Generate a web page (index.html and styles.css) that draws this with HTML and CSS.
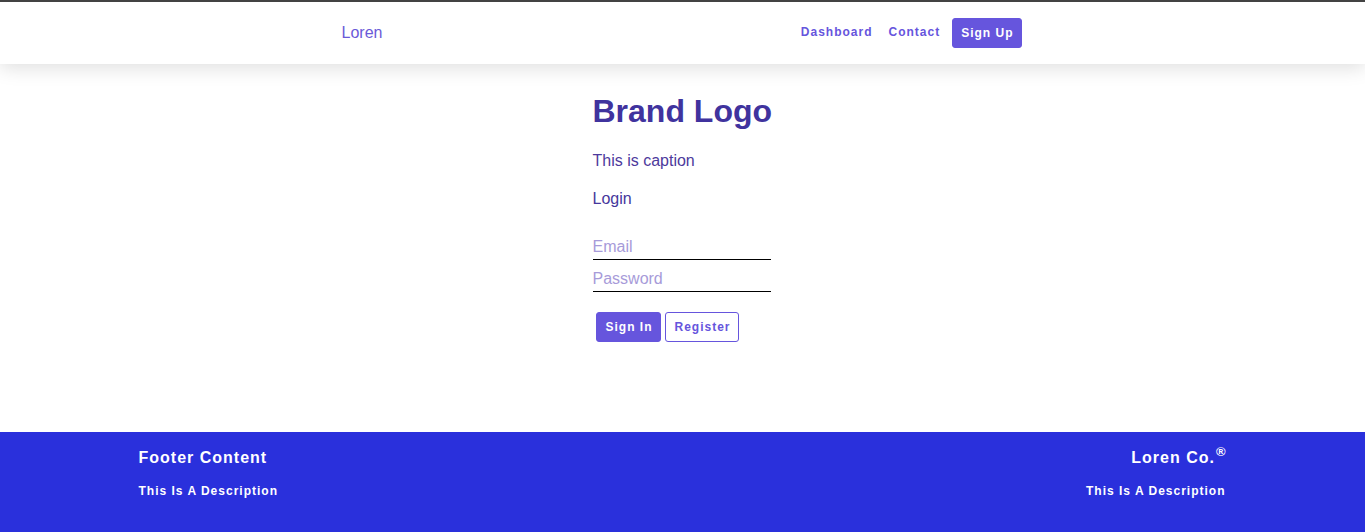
FILE: index.html
```
<!DOCTYPE html>
<html lang="en">
<head>
<meta charset="utf-8">
<title>Loren</title>
<link rel="stylesheet" href="styles.css">
</head>
<body>
<header class="topbar">
  <div class="topbar-inner">
    <a class="brand" href="#">Loren</a>
    <nav class="nav">
      <a class="nav-link" href="#">Dashboard</a>
      <a class="nav-link" href="#">Contact</a>
      <a class="btn btn-solid nav-btn" href="#">Sign Up</a>
    </nav>
  </div>
</header>
<main class="main">
  <div class="panel">
    <h1 class="logo">Brand Logo</h1>
    <p class="caption">This is caption</p>
    <p class="label">Login</p>
    <form class="form">
      <input class="field" type="email" placeholder="Email">
      <input class="field field-gap" type="password" placeholder="Password">
      <div class="actions">
        <button class="btn btn-solid" type="button">Sign In</button>
        <button class="btn btn-outline" type="button">Register</button>
      </div>
    </form>
  </div>
</main>
<footer class="footer">
  <div class="footer-inner">
    <div class="footer-col">
      <div class="footer-title">Footer Content</div>
      <div class="footer-desc">This Is A Description</div>
    </div>
    <div class="footer-col footer-right">
      <div class="footer-title">Loren Co.<sup class="reg">®</sup></div>
      <div class="footer-desc">This Is A Description</div>
    </div>
  </div>
</footer>
</body>
</html>
```
FILE: styles.css
```
* { box-sizing: border-box; }
html, body { margin: 0; padding: 0; }
body {
  font-family: "Liberation Sans", Arial, sans-serif;
  background: #ffffff;
  min-height: 100vh;
  display: flex;
  flex-direction: column;
}
a { text-decoration: none; }

.topbar {
  border-top: 2px solid #434343;
  background: #ffffff;
  height: 64px;
  box-shadow: 0 4px 18px rgba(0, 0, 0, 0.13);
  position: relative;
  z-index: 2;
}
.topbar-inner {
  width: 680px;
  margin: 0 auto;
  height: 62px;
  display: flex;
  align-items: center;
  justify-content: space-between;
}
.brand {
  color: #6a5ad8;
  font-size: 16px;
  line-height: 18px;
  margin-top: -1px;
  margin-left: -1px;
}
.nav {
  display: flex;
  align-items: center;
  margin-right: 1px;
}
.nav-link {
  color: #6655dd;
  font-size: 12px;
  font-weight: bold;
  letter-spacing: 1px;
  margin-right: 16px;
  margin-top: -3px;
}
.nav-link + .nav-link { margin-right: 12px; }

.btn {
  display: inline-block;
  font-family: "Liberation Sans", Arial, sans-serif;
  font-size: 12px;
  font-weight: bold;
  letter-spacing: 1px;
  line-height: 14px;
  padding: 7px 7px 7px 9px;
  border-radius: 3px;
  border: 1px solid #6655dd;
  cursor: pointer;
}
.btn-solid {
  background: #6655dd;
  color: #ffffff;
}
.btn-outline {
  background: #ffffff;
  color: #6655dd;
}
.nav-btn { padding: 7px 7px 7px 8px; margin-top: -1px; }

.main {
  flex: 1;
  background: #ffffff;
}
.panel {
  width: 180px;
  margin: 0 auto;
  padding-top: 29px;
}
.logo {
  margin: 0;
  font-size: 32px;
  line-height: 37px;
  font-weight: bold;
  color: #40339e;
  white-space: nowrap;
}
.caption {
  margin: 22px 0 0;
  font-size: 16px;
  line-height: 18px;
  color: #4d3a9c;
}
.label {
  margin: 20px 0 0;
  font-size: 16px;
  line-height: 18px;
  color: #46379c;
}
.form { margin-top: 27px; }
.field {
  display: block;
  width: 178px;
  border: none;
  border-bottom: 1px solid #000000;
  outline: none;
  padding: 3px 0 3px;
  font-family: "Liberation Sans", Arial, sans-serif;
  font-size: 16px;
  line-height: 18px;
  background: transparent;
  color: #333;
}
.field::placeholder { color: #a79bd9; }
.field-gap { margin-top: 7px; }
.actions {
  margin-top: 20px;
  padding-left: 3px;
  display: flex;
  gap: 4px;
}

.footer {
  background: #2a30dc;
  height: 100px;
  color: #ffffff;
}
.footer-inner {
  width: 1088px;
  margin: 0 auto;
  display: flex;
  justify-content: space-between;
  padding: 17px 1px 0 0;
}
.footer-col { display: flex; flex-direction: column; }
.footer-right { align-items: flex-end; }
.footer-title {
  font-size: 16px;
  line-height: 18px;
  font-weight: bold;
  letter-spacing: 1px;
}
.reg {
  font-size: 13px;
  line-height: 0;
  letter-spacing: 0;
  vertical-align: 7px;
  margin-left: 1px;
}
.footer-desc {
  margin-top: 17px;
  font-size: 12px;
  line-height: 14px;
  font-weight: bold;
  letter-spacing: 1px;
}
```
